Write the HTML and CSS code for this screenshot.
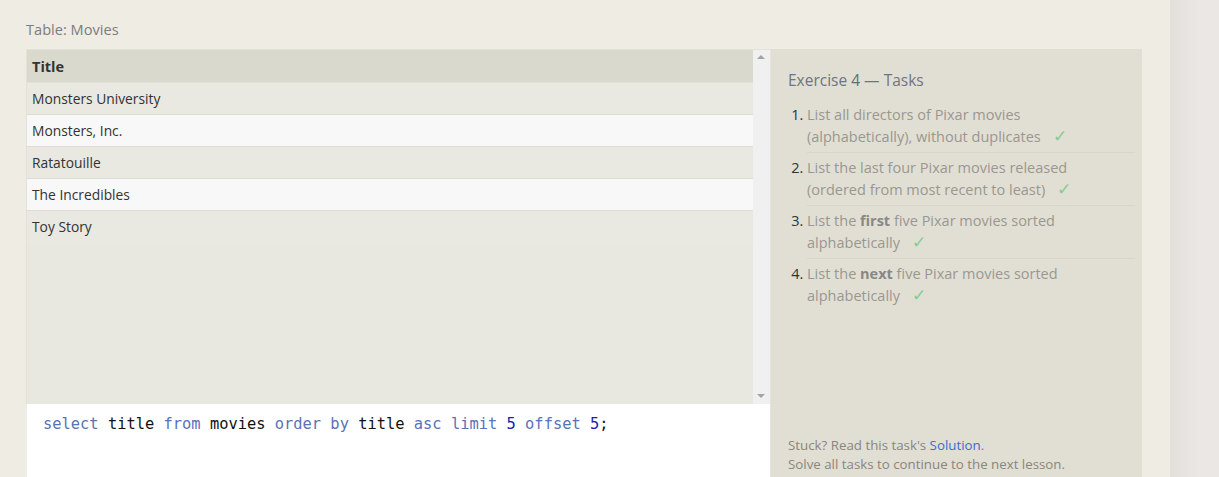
FILE: index.html
```html
<!DOCTYPE html>
<html>
<head>
<meta charset="utf-8">
<link rel="stylesheet" href="styles.css">
</head>
<body>
<div class="page">
  <div class="content">
    <div class="table-label">Table: Movies</div>
    <div class="workspace">
      <div class="left">
        <div class="results">
          <div class="rows">
            <div class="row head">Title</div>
            <div class="row odd">Monsters University</div>
            <div class="row even">Monsters, Inc.</div>
            <div class="row odd">Ratatouille</div>
            <div class="row even">The Incredibles</div>
            <div class="row odd">Toy Story</div>
          </div>
          <div class="scrollbar">
            <span class="arrow up"></span>
            <span class="arrow down"></span>
          </div>
        </div>
        <div class="editor"><span class="kw">select</span> <span class="id">title</span> <span class="kw">from</span> <span class="id">movies</span> <span class="kw">order by</span> <span class="id">title</span> <span class="kw">asc</span> <span class="kw">limit</span> <span class="num">5</span> <span class="kw">offset</span> <span class="num">5</span><span class="id">;</span></div>
      </div>
      <div class="panel">
        <div class="panel-title">Exercise <span class="ex-num">4</span> — Tasks</div>
        <ol class="tasks">
          <li>List all directors of Pixar movies (alphabetically), without duplicates <span class="check">✓</span></li>
          <li>List the last four Pixar movies released (ordered from most recent to least) <span class="check">✓</span></li>
          <li>List the <b>first</b> five Pixar movies sorted alphabetically <span class="check">✓</span></li>
          <li>List the <b>next</b> five Pixar movies sorted alphabetically <span class="check">✓</span></li>
        </ol>
        <div class="footer">
          <div>Stuck? Read this task's <a class="link">Solution</a>.</div>
          <div>Solve all tasks to continue to the next lesson.</div>
        </div>
      </div>
    </div>
  </div>
  <div class="strip"></div>
</div>
</body>
</html>
```
FILE: styles.css
```css
html, body {
  margin: 0;
  padding: 0;
  height: 100%;
  overflow: hidden;
}
body {
  background: #efece4;
  font-family: "Open Sans", "Noto Sans", sans-serif;
}
.page {
  display: flex;
  height: 100%;
}
.content {
  width: 1170px;
  padding: 19px 28px 0 26px;
  box-sizing: border-box;
}
.strip {
  flex: 1;
  background: linear-gradient(to right, #e3e0dc, #ebe7e4 60%, #ebe7e4);
}
.table-label {
  font-size: 14.6px;
  line-height: 20px;
  color: #7d7d7d;
  margin-bottom: 10px;
}
.workspace {
  display: flex;
  height: 436px;
}
.left {
  width: 744px;
  display: flex;
  flex-direction: column;
}
.results {
  height: 355px;
  display: flex;
  background: #e9e8e0;
  border: 1px solid #e4e2d8;
  border-right: none;
  border-bottom: none;
  box-sizing: border-box;
}
.rows {
  flex: 1;
}
.row {
  height: 32px;
  line-height: 31px;
  padding-left: 5px;
  font-size: 13.8px;
  color: #333;
  border-bottom: 1px solid #dedcd3;
  box-sizing: border-box;
}
.row.head {
  height: 33px;
  line-height: 33px;
  background: #dad9ce;
  font-weight: 700;
  color: #333;
  font-size: 14.5px;
  border-bottom: 1px solid #e2e1d8;
}
.row.odd { background: #e9e8e1; }
.row.even { background: #f8f8f8; }
.row:last-child { border-bottom: none; }
.scrollbar {
  width: 17px;
  background: #f0f0f0;
  position: relative;
}
.arrow {
  position: absolute;
  left: 4px;
  width: 0;
  height: 0;
  border-left: 4px solid transparent;
  border-right: 4px solid transparent;
}
.arrow.up {
  top: 5px;
  border-bottom: 4px solid #a3a3a3;
}
.arrow.down {
  bottom: 6px;
  border-top: 4px solid #a3a3a3;
}
.editor {
  flex: 1;
  background: #fff;
  margin-left: 1px;
  padding: 9px 0 0 16px;
  font-family: "DejaVu Sans Mono", "Liberation Mono", monospace;
  font-size: 15.4px;
  line-height: 22px;
  white-space: pre;
}
.kw { color: #5a72b8; }
.id { color: #111; }
.num { color: #1c20a8; }
.panel {
  width: 372px;
  background: #e1dfd4;
  border-left: 1px solid #e6e4da;
  box-sizing: border-box;
  padding: 19px 7px 11px 17px;
  display: flex;
  flex-direction: column;
}
.panel-title {
  font-size: 15.5px;
  line-height: 24px;
  color: #6e7482;
  margin-bottom: 12px;
}
.ex-num { color: #5e6d7a; }
.tasks {
  margin: 0;
  padding: 0 0 0 19px;
  font-size: 14.5px;
  line-height: 22px;
  color: #9a9791;
}
.tasks li {
  padding: 0 40px 4px 0;
  margin-bottom: 4px;
  border-bottom: 1px solid #d8d6ca;
}
.tasks li:last-child { border-bottom: none; }
.tasks li::marker {
  color: #333;
}
.tasks b {
  color: #888;
  font-weight: 700;
}
.check {
  color: #84cc92;
  margin-left: 8px;
  font-size: 17px;
  line-height: 0;
}
.footer {
  margin-top: auto;
  font-size: 13.3px;
  line-height: 19px;
  color: #8a867c;
}
.link { color: #3d6ad6; }
```
